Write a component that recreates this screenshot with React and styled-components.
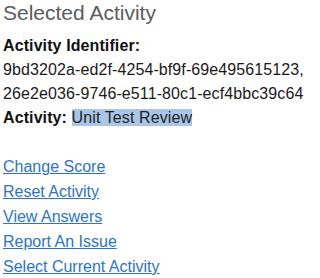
import styled, { createGlobalStyle } from 'styled-components'

const GlobalStyle = createGlobalStyle`
  body {
    margin: 0;
    background: #fff;
    font-family: "Liberation Sans", Arial, sans-serif;
  }
`

const activity = {
  ids: ['9bd3202a-ed2f-4254-bf9f-69e495615123', '26e2e036-9746-e511-80c1-ecf4bbc39c64'],
  name: 'Unit Test Review',
}

const actions = ['Change Score', 'Reset Activity', 'View Answers', 'Report An Issue', 'Select Current Activity']

function App() {
  return (
    <>
      <GlobalStyle />
      <Panel>
        <Title>Selected Activity</Title>
        <Details>
          <Label>Activity Identifier:</Label>
          {activity.ids.map((id, i) => (
            <IdLine key={id}>
              {id}
              {i < activity.ids.length - 1 ? ',' : ''}
            </IdLine>
          ))}
          <Row>
            <Label as="span">Activity:</Label> <Selected>{activity.name}</Selected>
          </Row>
        </Details>
        <Actions>
          {actions.map((a) => (
            <li key={a}>
              <ActionLink href="#">{a}</ActionLink>
            </li>
          ))}
        </Actions>
      </Panel>
    </>
  )
}

const Panel = styled.div`
  padding: 1px 3px 0 3px;
  color: #1a1a1a;
`

const Title = styled.h2`
  margin: 0;
  font-size: 21px;
  font-weight: normal;
  line-height: normal;
  color: #5c5c5c;
`

const Details = styled.div`
  margin-top: 9px;
  font-size: 16px;
  letter-spacing: 0.1px;
  line-height: 24px;
`

const Label = styled.div`
  font-weight: bold;
  color: #111;
`

const IdLine = styled.div`
  white-space: nowrap;
  color: #1a1a1a;
`

const Row = styled.div``

const Selected = styled.span`
  background: #a9c6e8;
  color: #1f1f1f;
`

const Actions = styled.ul`
  list-style: none;
  margin: 24px 0 0 0;
  padding: 0;
  font-size: 16px;
  line-height: 25px;
`

const ActionLink = styled.a`
  color: #2a74cc;
  text-decoration: underline;
`

export default App
